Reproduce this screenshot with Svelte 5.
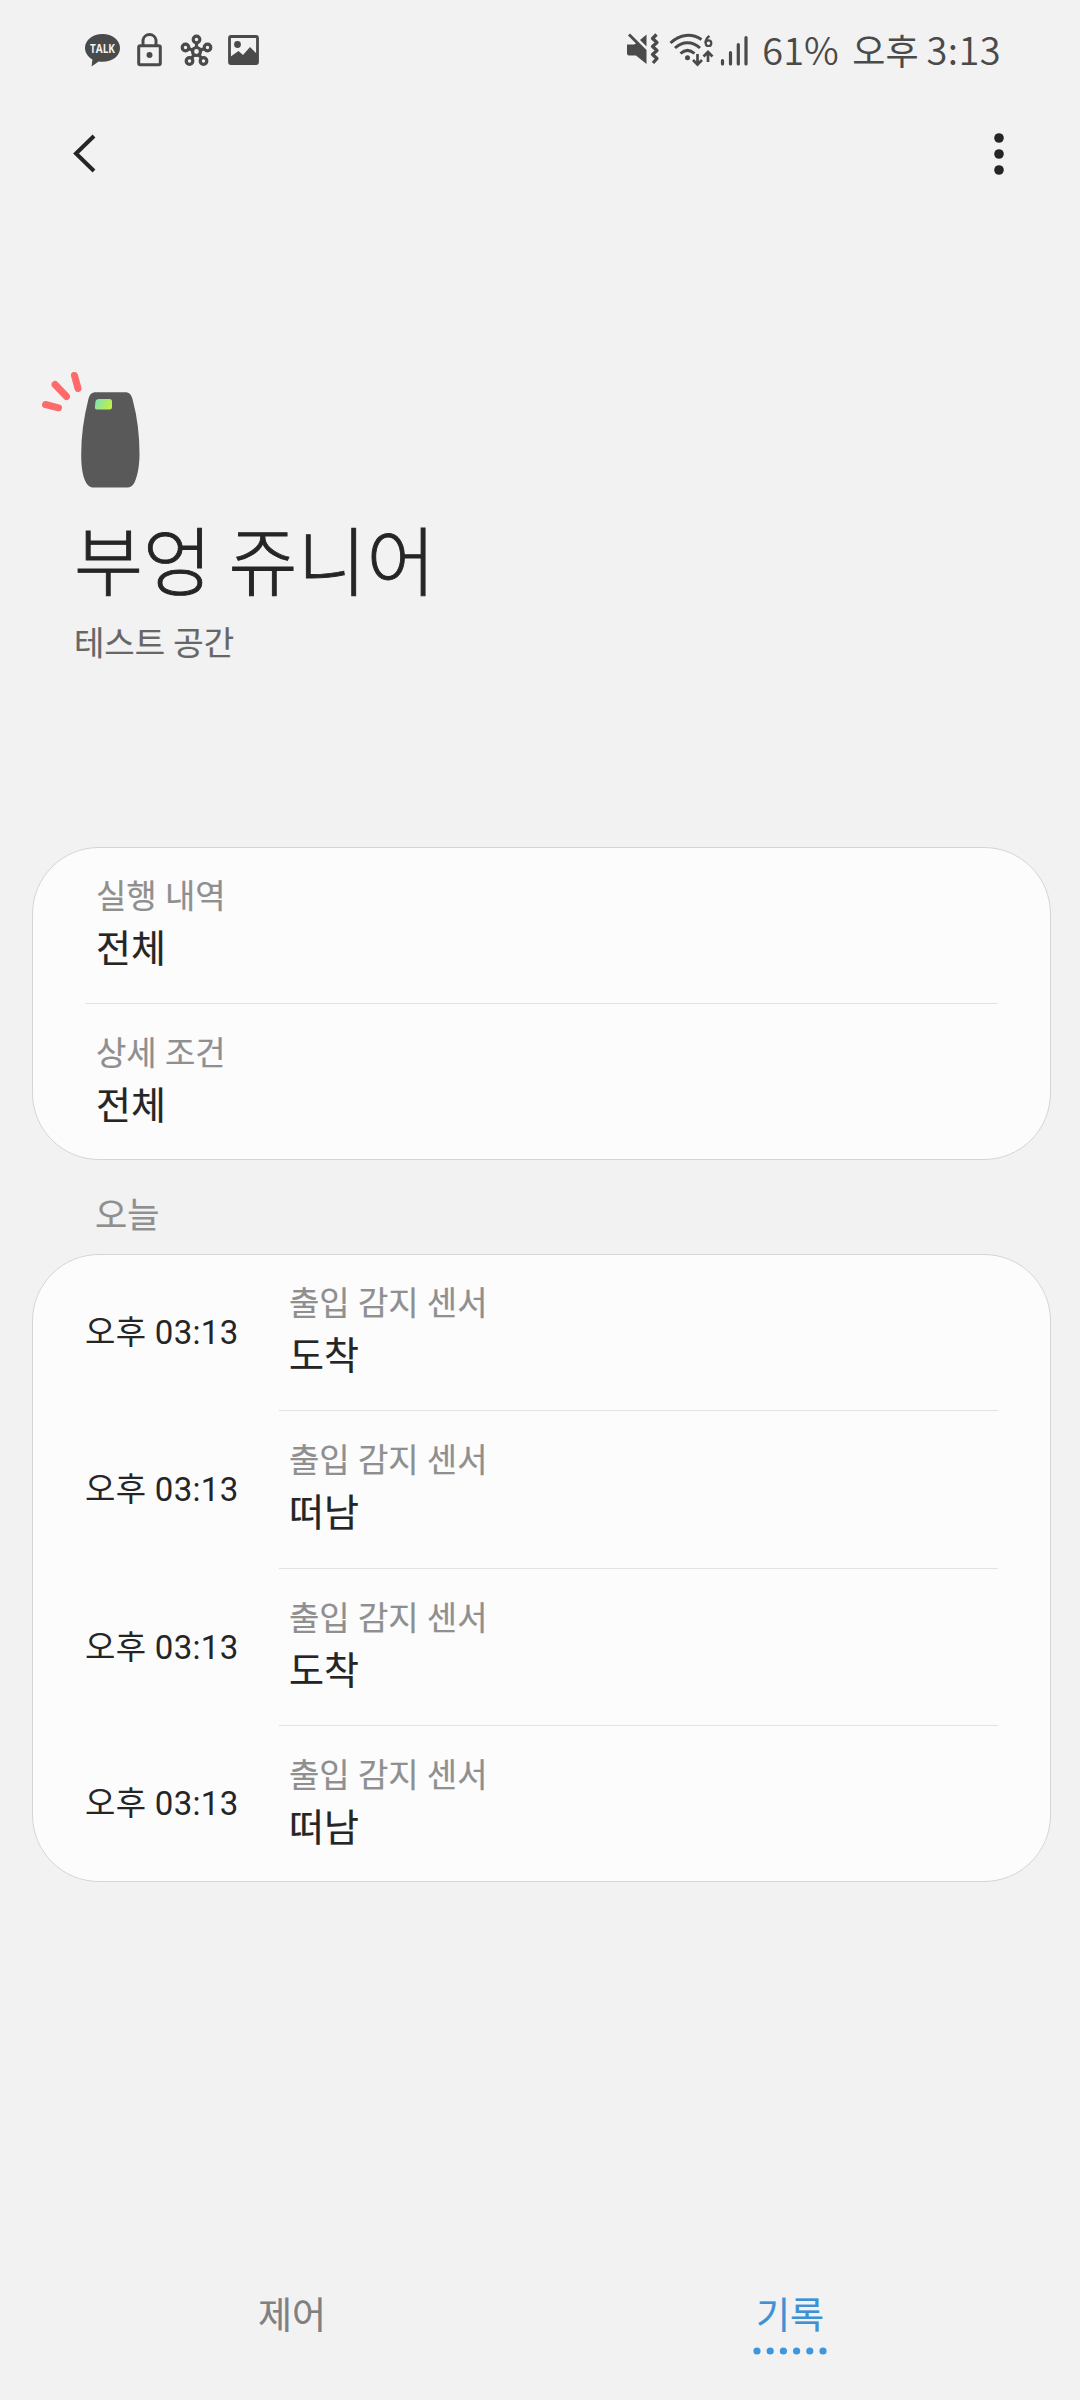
<script>
  const filters = [
    { label: "실행 내역", value: "전체" },
    { label: "상세 조건", value: "전체" },
  ];

  const history = [
    { time: "오후 03:13", label: "출입 감지 센서", value: "도착" },
    { time: "오후 03:13", label: "출입 감지 센서", value: "떠남" },
    { time: "오후 03:13", label: "출입 감지 센서", value: "도착" },
    { time: "오후 03:13", label: "출입 감지 센서", value: "떠남" },
  ];

  const tabs = [
    { id: "control", label: "제어" },
    { id: "history", label: "기록" },
  ];
  let activeTab = $state("history");

  // hub icon: five nodes around the centre ring
  const nodes = [
    [23, 7.5],
    [34, 15.5],
    [30, 29],
    [16, 29],
    [12, 15.5],
  ];
</script>

<div class="screen">
  <header class="status">
    <svg class="notices" width="180" height="40" viewBox="0 0 180 40" aria-hidden="true">
      <path d="M17.500 4C7.800 4 0 10 0 18c0 4.800 3 9 7.400 11.500L6.600 36.600l7-5.100c1.300.2 2.600.3 3.900.3C27.200 31.800 35 26 35 18S27.200 4 17.500 4z" fill="#4a4a4a" />
      <text x="17.500" y="22.800" text-anchor="middle" textLength="25" lengthAdjust="spacingAndGlyphs" class="talk">TALK</text>
      <g fill="none" stroke="#4a4a4a" stroke-width="3">
        <rect x="53.700" y="15.700" width="21.600" height="19" rx="1.500" />
        <path d="M58 15v-5a6.600 6.600 0 0 1 13 0v5" />
      </g>
      <circle cx="64.500" cy="25" r="3" fill="#4a4a4a" />
      <g transform="translate(88.500 2)" fill="none" stroke="#4a4a4a" stroke-width="3.200">
        {#each nodes as [x, y]}
          <path d="M23 19.500L{x} {y}" />
        {/each}
        {#each nodes as [x, y]}
          <circle cx={x} cy={y} r="3.300" fill="#f2f2f2" />
        {/each}
        <circle cx="23" cy="19.500" r="4" fill="#f2f2f2" />
      </g>
      <rect x="144.500" y="6.500" width="28" height="27" rx="1.500" fill="none" stroke="#4a4a4a" stroke-width="2.800" />
      <circle cx="152.500" cy="14.500" r="3.400" fill="#4a4a4a" />
      <path d="M145 27l8.500-6 4.500 4 7-8 7.500 7.500V33H145z" fill="#4a4a4a" />
    </svg>
    <svg class="signals" width="124" height="40" viewBox="0 0 124 40" aria-hidden="true">
      <g fill="#4a4a4a">
        <path d="M1 14.500h7l2-1L2 5.500l2-2L20.500 20v14L10 25.500H3q-2 0-2-2z" />
        <path d="M20.500 4.500v12L14 10z" />
        <circle cx="61.500" cy="27.700" r="2.500" />
      </g>
      <g fill="none" stroke="#4a4a4a">
        <path d="M30.500 4.500l-4 4 4.500 4-4.500 4 4.500 4-4.500 4 4.500 4-4 4.500" stroke-width="3.300" stroke-linejoin="round" />
        <path d="M44.500 13C54 3.700 66 3.300 75.500 9.500M49 18c7.500-7 17.500-7 25 0M54.500 23.500c4.500-4 9.500-4 14 0" stroke-width="3" />
        <path d="M71.500 24v10M67 30l4.500 4.500L76 30M82 32V22M77.500 26.500l4.500-4.500 4.500 4.500" stroke-width="2.700" />
        <path d="M83.500 6c-3 2-4 4.500-4 7" stroke-width="2.200" />
        <circle cx="82.500" cy="13.200" r="2.800" stroke-width="2.200" />
        <path d="M96.500 30.500v3.500M104.500 22.500v11.500M112.300 14.500v19.500M120 7.500v26.500" stroke-width="3.200" stroke-linecap="round" />
      </g>
    </svg>
    <span class="battery">61%</span>
    <span class="clock">오후 <span class="digits">3:13</span></span>
  </header>

  <nav class="toolbar">
    <button aria-label="뒤로">
      <svg width="24" height="42" viewBox="0 0 24 42">
        <path d="M21 3L3 20.500 21 38" fill="none" stroke="#252525" stroke-width="4" />
      </svg>
    </button>
    <button aria-label="더보기">
      <svg width="12" height="44" viewBox="0 0 12 44" fill="#252525">
        <circle cx="6" cy="6" r="4.800" />
        <circle cx="6" cy="22" r="4.800" />
        <circle cx="6" cy="38" r="4.800" />
      </svg>
    </button>
  </nav>

  <section class="device">
    <svg width="120" height="120" viewBox="0 0 120 120" aria-hidden="true">
      <defs>
        <linearGradient id="lamp" x1="0" y1="0" x2="1" y2="0.3">
          <stop offset="0" stop-color="#7be0be" />
          <stop offset="1" stop-color="#beef4c" />
        </linearGradient>
      </defs>
      <path d="M15.500 44.500l13 3.300M25 24.500l11.500 12M44.500 15.500l3.500 13" stroke="#ff6b6b" stroke-width="7" stroke-linecap="round" />
      <path d="M66 32.300h29c4.500 0 6.500 2.500 7.800 8C107.500 58 109.500 76 109.500 94c0 10-1.500 21-5 28.500-1.800 3.500-4 5-7.500 5H64c-4 0-6-1.500-8-5C52 115 51.200 104 51.200 94c0-18 2.500-36 7-54 1.300-5.500 3.300-7.700 7.800-7.700z" fill="#595959" />
      <path d="M69 39h10.500q2.500 0 2.500 2.500v5.500q0 2.500-2.500 2.500H67q-2.300 0-2.100-2.500l.6-5.500q.4-2.500 3.500-2.500z" fill="url(#lamp)" />
    </svg>
    <h1>부엉 쥬니어</h1>
    <p>테스트 공간</p>
  </section>

  <ul class="card">
    {#each filters as f}
      <li>
        <div class="entry">
          <span class="label">{f.label}</span>
          <span class="value">{f.value}</span>
        </div>
      </li>
    {/each}
  </ul>

  <h2>오늘</h2>

  <ul class="card">
    {#each history as h}
      <li>
        <time>{h.time}</time>
        <div class="entry">
          <span class="label">{h.label}</span>
          <span class="value">{h.value}</span>
        </div>
      </li>
    {/each}
  </ul>

  <nav class="tabs">
    {#each tabs as t (t.id)}
      <button class:active={activeTab === t.id} onclick={() => (activeTab = t.id)}>
        <span>{t.label}</span>
        <svg width="74" height="8" viewBox="0 0 74 8" aria-hidden="true">
          {#each Array(6) as _, i}
            <circle cx={4 + i * 13.2} cy="4" r="3.600" />
          {/each}
        </svg>
      </button>
    {/each}
  </nav>
</div>

<style>
  :global(body) { background: #f2f2f2; }
  .screen {
    box-sizing: border-box; width: 1080px; height: 2400px;
    display: flex; flex-direction: column;
    background: #f2f2f2; color: #252525;
    font-family: Roboto, "Noto Sans CJK KR", sans-serif;
  }
  button { background: none; border: 0; padding: 0; font: inherit; color: inherit; cursor: pointer; }
  svg { display: block; flex: none; overflow: visible; }
  h1, h2, p, ul { margin: 0; padding: 0; font-weight: 400; }

  .status {
    display: flex; align-items: center; height: 100px; flex: none;
    padding: 0 79px 0 85px; color: #4a4a4a; white-space: nowrap;
    font-family: "Noto Sans CJK KR", sans-serif; font-size: 36px; line-height: 58px;
  }
  .signals { margin-left: auto; }
  .battery, .clock { margin-top: -3px; }
  .talk { font: 700 12.500px "Open Sans", sans-serif; fill: #f2f2f2; }
  .battery { font-size: 38px; margin-left: 12px; width: 78px; font-weight: 350; }
  .clock { margin-left: 12px; }
  .digits { font-size: 38px; font-weight: 350; letter-spacing: 0.4px; }

  .toolbar {
    display: flex; justify-content: space-between; align-items: center;
    height: 107px; flex: none; padding: 0 75.500px 0 73px;
  }

  .device { height: 640px; flex: none; padding-top: 153px; box-sizing: border-box; }
  .device svg { margin-left: 30px; }
  .device h1 {
    margin: 28px 0 0 74px; font-size: 75px; line-height: 100px; font-weight: 300;
    font-family: "Noto Sans CJK KR", sans-serif; -webkit-text-stroke: 0.9px #252525;
  }
  .device p { margin: 11px 0 0 74px; font-size: 33px; line-height: 50px; color: #666; }

  /* Labels sit a touch heavier than the regular cut of the Korean face. */
  .device p, .label, .value, h2, .tabs span { -webkit-text-stroke: 0.2px currentColor; }

  .card {
    list-style: none; flex: none; margin: 0 29px 0 32px;
    background: #fcfcfc; border: 1px solid #d5d5d5; border-radius: 67px;
  }
  .card li { display: flex; align-items: stretch; padding: 0 52px; height: 157px; }
  .card li:first-child { height: 156px; }
  .card li:nth-child(2):not(:last-child) { height: 158px; }
  .card li:last-child { height: 155px; }
  .entry {
    flex: 1; box-sizing: border-box; display: flex; flex-direction: column;
    padding: 26px 0 0 11px; border-bottom: 1px solid #e2e2e2;
  }
  li:first-child .entry { padding-top: 25px; }
  li:last-child .entry { border-bottom: 0; }
  .label { font-size: 33px; line-height: 48px; color: #8f8f8f; }
  .value { font-size: 38px; line-height: 56px; }
  time + .entry { padding-left: 10px; }
  time { width: 194px; flex: none; align-self: center; font-size: 33px; line-height: 48px; letter-spacing: 0.3px; }

  h2 { height: 94px; padding-left: 95px; font-size: 35px; line-height: 114px; color: #8f8f8f; flex: none; }

  .tabs { display: flex; margin: auto 41px 45px 43px; }
  .tabs button {
    flex: 1; display: flex; flex-direction: column; align-items: center;
    color: #808080; font-size: 37px; line-height: 56px;
  }
  .tabs svg { margin-top: 2px; fill: none; }
  .tabs .active { color: #3e91d6; }
  .tabs .active svg { fill: #3e96dc; }
</style>
